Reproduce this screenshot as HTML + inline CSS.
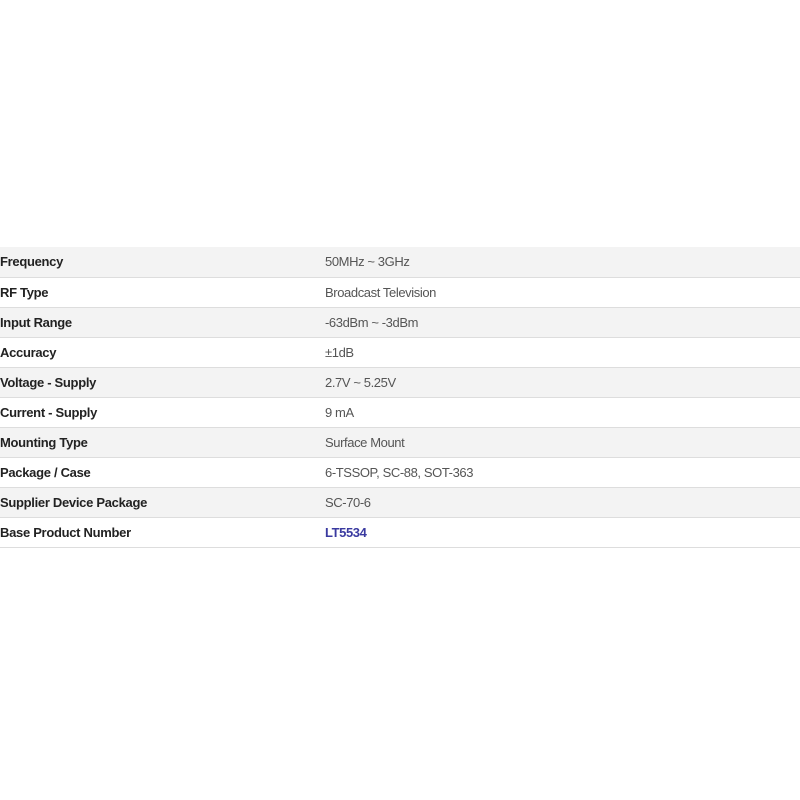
<!DOCTYPE html>
<html><head><style>
body{margin:0;background:#fff;width:800px;height:800px;overflow:hidden;font-family:"Liberation Sans",Arial,sans-serif;font-size:13px}
table{position:absolute;top:247px;left:0;width:800px;border-collapse:collapse}
td{height:29px;box-sizing:border-box;border-bottom:1px solid #ddd;padding:0;vertical-align:middle;line-height:29px}
tr{height:30px}
tr:nth-child(odd) td{background:#f3f3f3}
td.l{font-weight:bold;color:#222;width:325px;letter-spacing:-0.3px}
td.v{color:#555;letter-spacing:-0.4px}
a{color:#3a3aa0;font-weight:bold;text-decoration:none}
</style></head><body>
<table>
<tr><td class="l">Frequency</td><td class="v">50MHz ~ 3GHz</td></tr>
<tr><td class="l">RF Type</td><td class="v">Broadcast Television</td></tr>
<tr><td class="l">Input Range</td><td class="v">-63dBm ~ -3dBm</td></tr>
<tr><td class="l">Accuracy</td><td class="v">±1dB</td></tr>
<tr><td class="l">Voltage - Supply</td><td class="v">2.7V ~ 5.25V</td></tr>
<tr><td class="l">Current - Supply</td><td class="v">9 mA</td></tr>
<tr><td class="l">Mounting Type</td><td class="v">Surface Mount</td></tr>
<tr><td class="l">Package / Case</td><td class="v">6-TSSOP, SC-88, SOT-363</td></tr>
<tr><td class="l">Supplier Device Package</td><td class="v">SC-70-6</td></tr>
<tr><td class="l">Base Product Number</td><td class="v"><a>LT5534</a></td></tr>
</table>
</body></html>
